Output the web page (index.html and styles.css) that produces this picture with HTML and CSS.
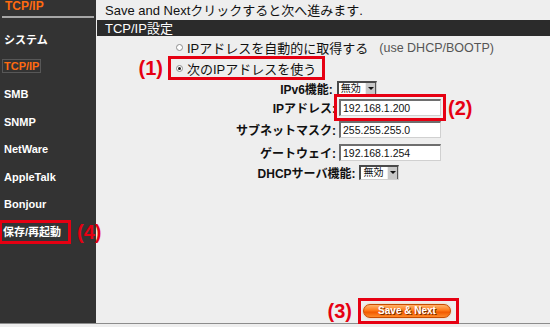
FILE: index.html
```html
<!DOCTYPE html>
<html lang="ja">
<head>
  <meta charset="UTF-8" />
  <title>TCP/IP設定</title>
  <link rel="stylesheet" href="styles.css">
</head>
<body>

  <div class="page">
    <aside class="side">
      <div class="side-head">TCP/IP</div>
      <ul class="menu">
        <li>システム</li>
        <li class="on"><span>TCP/IP</span></li>
        <li>SMB</li>
        <li>SNMP</li>
        <li>NetWare</li>
        <li>AppleTalk</li>
        <li>Bonjour</li>
        <li><span class="mark mark-menu">保存/再起動<span class="tag tag-right">(4)</span></span></li>
      </ul>
    </aside>

    <main class="main">
      <p class="hint">Save and Nextクリックすると次へ進みます.</p>
      <div class="bar">TCP/IP設定</div>

      <div class="modes">
        <div class="opt"><span class="radio"></span>IPアドレスを自動的に取得する<span class="note">(use DHCP/BOOTP)</span></div>
        <div class="opt"><span class="mark mark-opt"><span class="tag tag-left">(1)</span><span class="radio checked"></span>次のIPアドレスを使う</span></div>
      </div>

      <div class="form">
        <div class="pair">
          <span class="lbl">IPv6機能:</span>
          <span class="select"><span class="select-val">無効</span><span class="select-btn"></span></span>
        </div>
        <span class="lbl">IPアドレス:</span>
        <span class="mark mark-field"><input class="field" value="192.168.1.200"><span class="tag tag-right">(2)</span></span>
        <span class="lbl">サブネットマスク:</span>
        <input class="field" value="255.255.255.0">
        <span class="lbl">ゲートウェイ:</span>
        <input class="field" value="192.168.1.254">
        <div class="pair">
          <span class="lbl">DHCPサーバ機能:</span>
          <span class="select"><span class="select-val">無効</span><span class="select-btn"></span></span>
        </div>
      </div>

      <div class="actions">
        <span class="mark mark-btn"><span class="tag tag-left">(3)</span><button class="save">Save &amp; Next</button></span>
      </div>
    </main>
  </div>

</body>
</html>
```

FILE: styles.css
```css
body {
  margin: 0;
  background: #eeeeee;
  font-family: 'Liberation Sans', 'Noto Sans CJK JP', sans-serif;
  color: #111;
  overflow: hidden;
}

.page {
  display: flex;
  height: 323px;
  border-bottom: 1px solid #8c8c8c;
}

/* left menu */
.side {
  width: 96px;
  flex: none;
  background: #333333;
  color: #fff;
}

.side-head {
  height: 16px;
  margin: -4px 0 0;
  padding: 0 0 0 5px;
  color: #ff6a10;
  font-size: 12px;
  font-weight: bold;
  line-height: 20px;
  box-sizing: border-box;
}

.menu {
  list-style: none;
  margin: 4px 2px 0;
  padding: 7px 0 0;
  border-top: 2px solid #a6a6a6;
}

.menu li {
  height: 27.6px;
  display: flex;
  align-items: center;
  padding-left: 2px;
  font-size: 11px;
  font-weight: bold;
}

.menu li.on span {
  color: #ff6a10;
  border: 1px solid #575757;
  padding: 0 1px;
  margin-left: -2px;
}

/* annotations */
.mark {
  position: relative;
  outline: 3px solid #e60012;
}

.tag {
  position: absolute;
  top: 50%;
  transform: translateY(-50%);
  color: #e60012;
  font-size: 20px;
  font-weight: bold;
  white-space: nowrap;
  line-height: 1;
}

.tag-left { right: calc(100% + 8px); }
.tag-right { left: calc(100% + 5px); }

.mark-menu {
  display: inline-block;
  padding: 2px 7px 2px 1px;
  margin-left: -2px;
  line-height: 14px;
}

.mark-menu .tag { left: calc(100% + 9px); }

/* main area */
.main {
  flex: 1;
  display: flex;
  flex-direction: column;
  padding-left: 1px;
}

.hint {
  margin: 0;
  height: 20px;
  padding-left: 8px;
  font-size: 13px;
  line-height: 21px;
}

.bar {
  height: 16px;
  background: #2b2b2b;
  color: #fff;
  padding-left: 8px;
  font-size: 13px;
  line-height: 17px;
}

.modes {
  padding: 1px 0 0 74px;
  font-size: 13px;
}

.opt {
  display: flex;
  align-items: center;
  height: 21px;
}

.opt + .opt { height: 18px; margin-top: 1px; }

.mark-opt {
  display: flex;
  align-items: center;
  height: 18px;
  padding: 0 6px 0 5px;
}

.modes > .opt:first-child { padding-left: 5px; }

.radio {
  width: 5px;
  height: 5px;
  border: 1px solid #8d8d8d;
  border-radius: 50%;
  background: #fff;
  margin-right: 4px;
  position: relative;
}

.radio.checked::after {
  content: '';
  position: absolute;
  left: 1px;
  top: 1px;
  width: 3px;
  height: 3px;
  border-radius: 50%;
  background: #222;
}

.note {
  margin-left: 11px;
  color: #555;
  font-size: 12.5px;
}

.form {
  display: grid;
  grid-template-columns: 239px 1fr;
  grid-template-rows: 20px 19px 25px 21px 18px;
  column-gap: 3px;
  align-items: center;
  justify-items: start;
  margin-top: 1px;
  font-size: 12px;
}

.lbl {
  justify-self: end;
  white-space: nowrap;
  font-weight: bold;
}

.pair {
  grid-column: 1 / -1;
  justify-self: center;
  display: flex;
  align-items: center;
  gap: 4px;
  margin-left: 10px;
}

.field {
  width: 102px;
  height: 17px;
  box-sizing: border-box;
  margin: 0;
  padding: 0 2px;
  border-style: solid;
  border-width: 2px 1px 1px 2px;
  border-color: #6e6e6e #d0d0d0 #d0d0d0 #6e6e6e;
  background: #fff;
  font-family: 'Liberation Sans', sans-serif;
  font-size: 10.5px;
  color: #111;
}

.mark-field {
  display: inline-block;
  width: 102px;
  padding: 2px;
  margin-left: -2px;
  line-height: 0;
}

.select {
  display: inline-flex;
  align-items: center;
  height: 15px;
  box-sizing: border-box;
  background: #fff;
  border-style: solid;
  border-width: 2px 1px 1px 2px;
  border-color: #4a4a4a #cfcfcf #cfcfcf #4a4a4a;
  padding-left: 2px;
  font-size: 10px;
  font-weight: normal;
}

.select-val {
  line-height: 10px;
  margin-right: 4px;
}

.select-btn {
  width: 9px;
  height: 12px;
  background: #c8c8c8;
  border-left: 1px solid #eee;
  border-right: 1px solid #555;
  position: relative;
}

.select-btn::after {
  content: '';
  position: absolute;
  left: 2px;
  top: 4px;
  border-left: 3px solid transparent;
  border-right: 3px solid transparent;
  border-top: 3px solid #111;
}

.actions {
  margin-top: auto;
  padding: 0 0 1px 264px;
  height: 22px;
}

.mark-btn {
  display: inline-block;
  padding: 3px 5px 3px 2px;
  line-height: 0;
}

.mark-btn .tag { right: calc(100% + 9px); }

.save {
  width: 88px;
  height: 14px;
  padding: 0;
  border: 1px solid #c84b00;
  border-radius: 8px;
  background: linear-gradient(#ffb36a 0%, #ff7a1a 45%, #f25a00 60%, #ff8a2a 100%);
  color: #fff;
  font-family: 'Liberation Sans', sans-serif;
  font-size: 10px;
  font-weight: bold;
  line-height: 12px;
  text-shadow: 1px 1px 0 #7a2d00;
  box-shadow: 0 0 2px #f7b48a;
  cursor: pointer;
}
```
